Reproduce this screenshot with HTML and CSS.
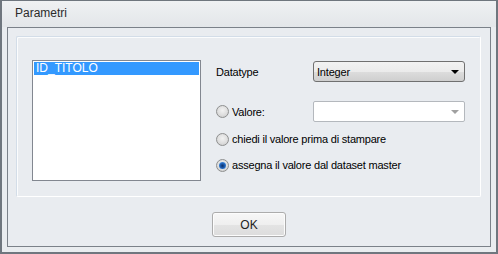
FILE: index.html
```html
<!DOCTYPE html>
<html>
<head>
<meta charset="utf-8">
<link rel="stylesheet" href="styles.css">
</head>
<body>
<div class="window">
  <div class="title">Parametri</div>
  <div class="frame">
    <div class="group">
      <div class="listbox">
        <div class="item selected">ID_TITOLO</div>
      </div>
      <div class="controls">
        <div class="row row-combo">
          <span class="label">Datatype</span>
          <div class="combo">
            <span class="combo-text">Integer</span>
            <span class="arrow"></span>
          </div>
        </div>
        <div class="row row-combo second">
          <span class="label radio-label"><span class="radio"></span>Valore:</span>
          <div class="combo disabled">
            <span class="combo-text"></span>
            <span class="arrow"></span>
          </div>
        </div>
        <div class="row row-radio third">
          <span class="radio"></span>chiedi il valore prima di stampare
        </div>
        <div class="row row-radio fourth">
          <span class="radio checked"></span>assegna il valore dal dataset master
        </div>
      </div>
    </div>
    <div class="buttons">
      <div class="button">OK</div>
    </div>
  </div>
</div>
</body>
</html>
```
FILE: styles.css
```css
html, body {
  margin: 0;
  padding: 0;
  background: #e9ecef;
}
.window {
  width: 498px;
  height: 254px;
  box-sizing: border-box;
  border: 2px solid #6f767e;
  border-top-width: 1px;
  background: #e9ecef;
  font-family: "Liberation Sans", Arial, sans-serif;
  font-size: 11px;
  letter-spacing: -0.2px;
  color: #000;
  display: flex;
  flex-direction: column;
}
.title {
  height: 26px;
  box-sizing: border-box;
  padding-left: 13px;
  padding-top: 5px;
  font-size: 12px;
  letter-spacing: 0;
  color: #2b2b2b;
  background: linear-gradient(#eff1f3, #e3e6e9);
}
.frame {
  margin-left: 5px;
  width: 484px;
  height: 220px;
  box-sizing: border-box;
  border: 1px solid #7b8189;
  background: #e9ecf0;
  display: flex;
  flex-direction: column;
}
.group {
  margin-left: 8px;
  margin-top: 8px;
  width: 465px;
  height: 161px;
  box-sizing: border-box;
  border: 1px solid #d3dde8;
  border-right-color: #fff;
  border-bottom-color: #fff;
  border-radius: 2px;
  box-shadow: inset 1px 1px 0 #fbfcfd;
  display: flex;
  padding-left: 15px;
  padding-top: 23px;
}
.listbox {
  width: 169px;
  height: 121px;
  box-sizing: border-box;
  border: 1px solid #828790;
  background: #fff;
  padding: 1px;
}
.item {
  height: 13px;
  line-height: 13px;
  padding-left: 2px;
  font-size: 12px;
  letter-spacing: 0;
}
.item.selected {
  background: #3399ff;
  color: #fff;
}
.controls {
  margin-left: 15px;
  margin-top: 1px;
  display: flex;
  flex-direction: column;
}
.row {
  display: flex;
  align-items: center;
}
.row-combo {
  height: 21px;
}
.row.second {
  margin-top: 19px;
}
.row-radio {
  height: 16px;
}
.row.third {
  margin-top: 9px;
}
.row.fourth {
  margin-top: 10px;
}
.label {
  width: 97px;
  display: flex;
  align-items: center;
}
.radio {
  width: 13px;
  height: 13px;
  box-sizing: border-box;
  border-radius: 50%;
  border: 1px solid #8e8f8f;
  background: radial-gradient(circle at 50% 40%, #f2f2f2 0%, #dedede 55%, #c6c6c6 100%);
  margin-right: 3px;
  flex: none;
  position: relative;
}
.radio.checked::after {
  content: "";
  position: absolute;
  left: 2px;
  top: 2px;
  width: 7px;
  height: 7px;
  border-radius: 50%;
  background: radial-gradient(circle at 50% 55%, #0c2e63 0%, #1f5fb5 45%, #5fb2ff 100%);
}
.combo {
  width: 152px;
  height: 21px;
  box-sizing: border-box;
  border: 1px solid #707070;
  border-radius: 3px;
  background: linear-gradient(#f2f2f2 0%, #ebebeb 50%, #dddddd 51%, #cfcfcf 100%);
  display: flex;
  align-items: center;
  justify-content: space-between;
  padding-left: 3px;
  padding-right: 5px;
}
.combo-text {
  font-size: 11px;
}
.arrow {
  width: 0;
  height: 0;
  border-left: 4px solid transparent;
  border-right: 4px solid transparent;
  border-top: 4px solid #000;
}
.combo.disabled {
  border-color: #b4b8bd;
  border-radius: 2px;
  background: #fff;
}
.combo.disabled .arrow {
  border-top-color: #a0a0a0;
}
.buttons {
  display: flex;
  justify-content: center;
  margin-top: 15px;
}
.button {
  width: 74px;
  height: 25px;
  box-sizing: border-box;
  border: 1px solid #acacac;
  border-radius: 3px;
  background: linear-gradient(#f7f7f7 0%, #efefef 50%, #e4e4e4 51%, #dcdcdc 100%);
  box-shadow: inset 0 0 0 1px #fcfcfc;
  display: flex;
  align-items: center;
  justify-content: center;
  font-size: 12px;
  letter-spacing: 0;
  color: #222;
}
```
